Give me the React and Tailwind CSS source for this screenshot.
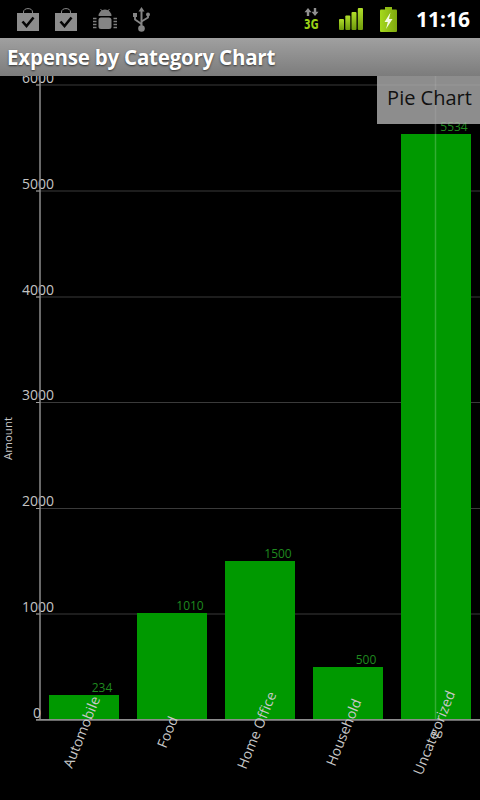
const ticks = [
  { v: "6000", y: 85 },
  { v: "5000", y: 191 },
  { v: "4000", y: 297 },
  { v: "3000", y: 402.5 },
  { v: "2000", y: 508.5 },
  { v: "1000", y: 614 },
];

const bars = [
  { name: "Automobile", value: "234", x: 49, top: 695, lx: 76, ly: 769 },
  { name: "Food", value: "1010", x: 137, top: 613, lx: 170, ly: 749 },
  { name: "Home Office", value: "1500", x: 225, top: 561, lx: 250, ly: 770 },
  { name: "Household", value: "500", x: 313, top: 667, lx: 339, ly: 767 },
  { name: "Uncategorized", value: "5534", x: 401, top: 134, lx: 426, ly: 776 },
];

function Bag({ className }) {
  return (
    <svg viewBox="0 0 22 23" className={className}>
      <path d="M6.500 6V4C6.500 1.800 8.500.6 11 .6s4.500 1.200 4.500 3.400V6" fill="none" stroke="#8a8a8a" strokeWidth="1" />
      <rect x="0" y="5" width="22" height="18" fill="#8c8c8c" />
      <path d="M5.500 13.500 9.500 18 16.500 9.500" fill="none" stroke="#050505" strokeWidth="2.600" />
    </svg>
  );
}

function Android({ className }) {
  return (
    <svg viewBox="0 0 24 22" className={className}>
      <path d="M5.500 8a6.500 6.500 0 0 1 13 0Z" fill="#7e7e7e" />
      <path d="M7.500 1 9.500 3.500M16.500 1 14.500 3.500" stroke="#7e7e7e" strokeWidth="1" />
      <rect x="5.500" y="9.500" width="13" height="11.500" rx="2.500" fill="#858585" />
      <path d="M0 10.500h3.500M0 13.500h3.500M0 16.500h3.500M0 19.500h3.500M20.500 10.500h3.500M20.500 13.500h3.500M20.500 16.500h3.500M20.500 19.500h3.500" stroke="#7e7e7e" strokeWidth="1.700" />
    </svg>
  );
}

function Usb({ className }) {
  return (
    <svg viewBox="0 0 17 25" className={className}>
      <path d="M8.500 2v19" stroke="#858585" strokeWidth="2" />
      <path d="M8.500 0 11.500 4.500H5.500Z" fill="#858585" />
      <path d="M2 9v3.500L8.500 17M15 8.500v2L8.500 14.500" fill="none" stroke="#858585" strokeWidth="1.800" />
      <rect x="0" y="6" width="4" height="4" fill="#858585" />
      <circle cx="15" cy="7.500" r="2" fill="#858585" />
      <circle cx="8.500" cy="21.500" r="3.300" fill="#858585" />
    </svg>
  );
}

function ThreeG({ className }) {
  return (
    <svg viewBox="0 0 15 22" className={className}>
      <path d="M4 0 7.500 4.200H5.200V8H2.800V4.200H.5Z" fill="#909090" />
      <path d="M11 8 7.500 3.800h2.300V0h2.400v3.800h2.300Z" fill="#909090" />
      <text x="0" y="20.500" textLength="14.500" lengthAdjust="spacingAndGlyphs" fontFamily="'DejaVu Sans', sans-serif" fontWeight="700" fontSize="14" fill="#9bd117">3G</text>
    </svg>
  );
}

function Signal({ className }) {
  return (
    <svg viewBox="0 0 24 22" className={className}>
      <defs>
        <linearGradient id="sg" x1="0" y1="0" x2="0" y2="1">
          <stop offset="0" stopColor="#b0de2a" />
          <stop offset="1" stopColor="#6f9a0c" />
        </linearGradient>
      </defs>
      <rect x="0" y="11" width="5" height="11" rx="1" fill="url(#sg)" />
      <rect x="6.300" y="7.500" width="5" height="14.500" rx="1" fill="url(#sg)" />
      <rect x="12.500" y="4" width="5" height="18" rx="1" fill="url(#sg)" />
      <rect x="18.800" y="0" width="5.200" height="22" rx="1" fill="url(#sg)" />
    </svg>
  );
}

function Battery({ className }) {
  return (
    <svg viewBox="0 0 17 25" className={className}>
      <defs>
        <linearGradient id="bt" x1="0" y1="0" x2="1" y2="0">
          <stop offset="0" stopColor="#a5d91c" />
          <stop offset="1" stopColor="#7fa80f" />
        </linearGradient>
      </defs>
      <rect x="5" y="0" width="7" height="3" fill="#8fbc14" />
      <rect x="0" y="2.500" width="17" height="22.500" rx="1" fill="url(#bt)" />
      <path d="M10.500 5.500 4.500 15h3.300L6 22l6.500-10H9Z" fill="#f4fbe0" />
    </svg>
  );
}

function Chart() {
  const font = "'Open Sans', sans-serif";
  return (
    <svg viewBox="0 0 480 724" className="block w-[480px] h-[724px]">
      <g transform="translate(0 -76)">
        {ticks.map((t) => (
          <g key={t.v}>
            <line x1="36" x2="480" y1={t.y} y2={t.y} stroke="#3a3a3a" strokeWidth="1" />
            <line x1="36" x2="40" y1={t.y} y2={t.y} stroke="#a0a0a0" strokeWidth="1" />
            <text x="54" y={t.y - 2.5} textAnchor="end" fontFamily={font} fontSize="14" fill="#c4c4c4">{t.v}</text>
          </g>
        ))}
        {bars.map((b) => (
          <g key={b.name}>
            <rect x={b.x} y={b.top} width="70" height={720 - b.top} fill="#009900" />
            <text x={b.x + 53} y={b.top - 3} textAnchor="middle" fontFamily={font} fontSize="12" fill="#1f8a1f">{b.value}</text>
          </g>
        ))}
        <line x1="435.500" x2="435.500" y1="76" y2="720" stroke="#ffffff" strokeOpacity="0.200" strokeWidth="1.500" />
        <line x1="40" x2="40" y1="76" y2="720" stroke="#8c8c8c" strokeWidth="1.500" />
        <line x1="36" x2="480" y1="719.800" y2="719.800" stroke="#8c8c8c" strokeWidth="1.800" />
        <text x="41" y="718" textAnchor="end" fontFamily={font} fontSize="14" fill="#c4c4c4">0</text>
        <text transform="translate(12 460) rotate(-90)" fontFamily={font} fontSize="11.500" fill="#c8c8c8">Amount</text>
        {bars.map((b) => (
          <text
            key={b.name}
            transform={`translate(${b.lx - 4} ${b.ly}) rotate(-68)`}
            fontFamily={font}
            fontSize="14"
            fill="#c8c8c8"
          >
            {b.name === "Uncategorized" ? (
              <>
                Uncate<tspan dx="-5">gorized</tspan>
              </>
            ) : (
              b.name
            )}
          </text>
        ))}
      </g>
    </svg>
  );
}

export default function App() {
  return (
    <div className="relative w-[480px] h-[800px] overflow-hidden bg-black">
      <div className="flex items-center h-[38px] bg-black">
        <div className="flex items-center gap-[16px] pl-[17px]">
          <Bag className="w-[22px] h-[23px]" />
          <Bag className="w-[22px] h-[23px]" />
          <Android className="w-[24px] h-[22px]" />
          <Usb className="w-[17px] h-[25px]" />
        </div>
        <div className="flex items-center ml-auto pr-[10px]">
          <ThreeG className="w-[15px] h-[22px]" />
          <Signal className="w-[24px] h-[22px] ml-[20px]" />
          <Battery className="w-[17px] h-[25px] ml-[17px]" />
          <span className="ml-[19px] text-[21px] leading-none font-bold text-white font-['Open_Sans',sans-serif]">11:16</span>
        </div>
      </div>
      <div className="flex items-center h-[38px] px-[7px] bg-gradient-to-b from-[#a0a0a0] to-[#7c7c7c]">
        <span className="text-[20.5px] tracking-[-0.22px] font-bold text-white font-['Open_Sans',sans-serif] [text-shadow:0_1px_2px_#333]">Expense by Category Chart</span>
      </div>
      <Chart />
      <div className="absolute left-[377px] top-[76px] flex items-center justify-center w-[103px] h-[48px] pb-[4px] pl-[2px] bg-[#b0b0b0]/80 text-[20px] text-[#111] font-['Open_Sans',sans-serif]">
        Pie Chart
      </div>
    </div>
  );
}
